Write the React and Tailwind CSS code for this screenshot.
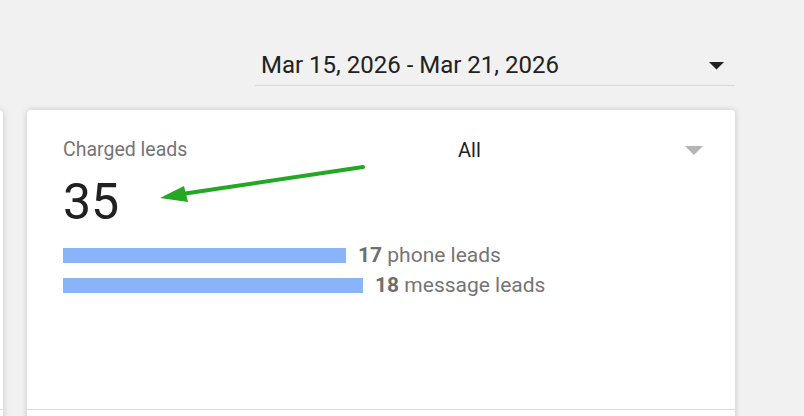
import React from "react";

const leads = [
  { count: 17, label: "phone leads" },
  { count: 18, label: "message leads" },
];

const BAR_UNIT = 16.67; // px per lead

const App = () => {
  return (
    <div className="w-[804px] h-[416px] overflow-hidden bg-[#f1f1f1] font-['Roboto','Liberation_Sans',sans-serif]">
      {/* date range picker */}
      <div className="flex justify-end pr-[69px] pt-[50px]">
        <div className="w-[480px] flex items-center justify-between border-b border-[#d6d6d6] pl-[6px] pr-[11px] pb-[5px]">
          <span className="text-[24px] leading-[30px] text-[#212121]">
            Mar 15, 2026 - Mar 21, 2026
          </span>
          <svg width="15" height="8" viewBox="0 0 15 8" className="mt-[1px]">
            <path d="M0 0h15L7.5 7.5z" fill="#212121" />
          </svg>
        </div>
      </div>

      {/* cards */}
      <div className="flex gap-6 mt-[24px] -ml-[300px]">
        <div className="w-[303px] shrink-0 bg-white rounded shadow-[0_0_6px_rgba(0,0,0,0.18)]">
          <div className="h-[299px]" />
          <div className="border-t border-[#dcdcdc] h-[40px]" />
        </div>

        <div className="relative w-[708px] shrink-0 bg-white rounded shadow-[0_0_6px_rgba(0,0,0,0.18)]">
          <div className="h-[299px] pl-[36px] pr-[32px] pt-[28px]">
            <div className="flex items-center h-[24px]">
              <span className="w-[395px] text-[19.5px] text-[#757575]">Charged leads</span>
              <span className="flex-1 text-[20px] text-[#212121]">All</span>
              <svg width="18" height="9" viewBox="0 0 18 9">
                <path d="M0 0h18L9 9z" fill="#b5b5b5" />
              </svg>
            </div>

            <div className="text-[50px] leading-[62px] text-[#212121] mt-[9px]">35</div>

            <div className="flex flex-col gap-[15px] mt-[15px]">
              {leads.map((l) => (
                <div key={l.label} className="flex items-center h-[15px]">
                  <div
                    className="h-[15px] bg-[#8ab4f8]"
                    style={{ width: `${Math.round(l.count * BAR_UNIT)}px` }}
                  />
                  <span className="ml-[12px] text-[21px] text-[#757575] whitespace-nowrap">
                    <b className="font-bold text-[#6f6f6f]">{l.count}</b> {l.label}
                  </span>
                </div>
              ))}
            </div>
          </div>
          <div className="border-t border-[#dcdcdc] h-[40px]" />

          {/* annotation arrow */}
          <svg
            className="absolute left-0 top-0 pointer-events-none"
            width="708"
            height="120"
            viewBox="0 0 708 120"
          >
            <line x1="336" y1="57" x2="155" y2="84" stroke="#22a822" strokeWidth="4" strokeLinecap="round" />
            <path d="M133 88 L157 76 L161 92 Z" fill="#22a822" />
          </svg>
        </div>
      </div>
    </div>
  );
};

export default App;
